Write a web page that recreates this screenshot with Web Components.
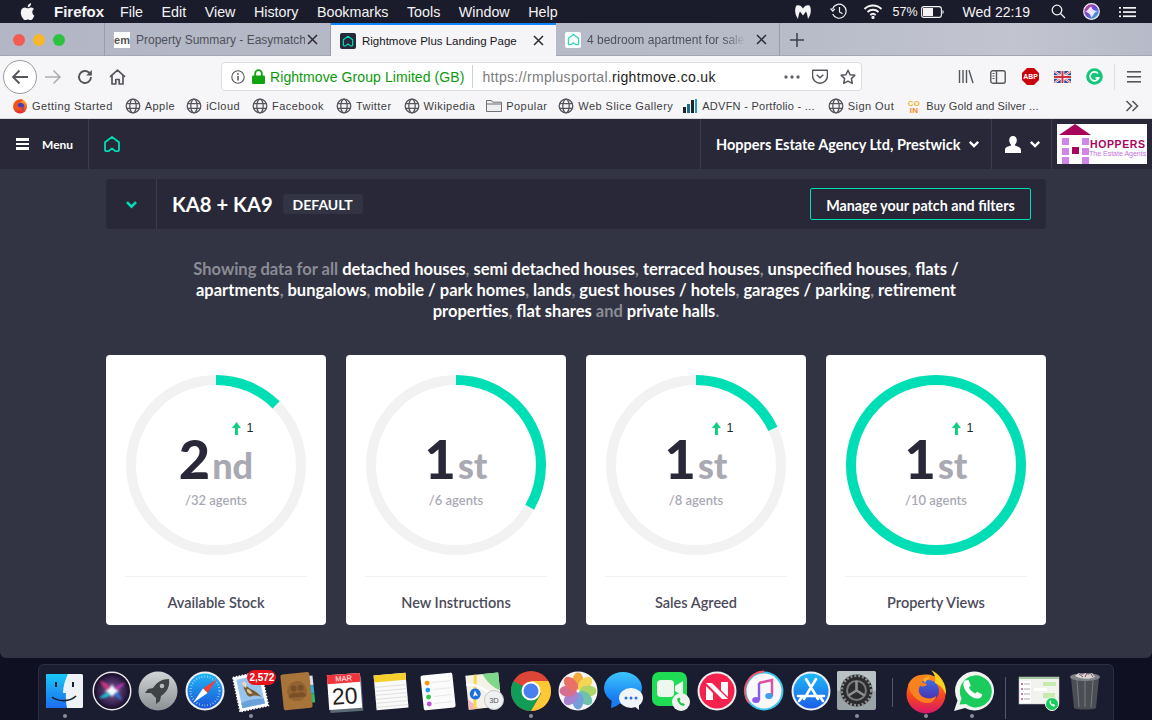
<!DOCTYPE html>
<html lang="en">
<head>
<meta charset="utf-8">
<title>Rightmove Plus Landing Page</title>
<style>
html, body { margin: 0; padding: 0; height: 100%; }
body {
    width: 1152px; height: 720px; overflow: hidden; background: #0f1122;
    display: flex; flex-direction: column;
    font-family: "Liberation Sans", Arial, sans-serif;
}
.window { display: flex; flex-direction: column; height: 635px; border-radius: 0 0 6px 6px; overflow: hidden; background: #323443; }
.main { flex: 1; display: flex; flex-direction: column; align-items: center; }
</style>
</head>
<body>
<mac-menubar></mac-menubar>
<div class="window">
    <browser-tabs></browser-tabs>
    <nav-toolbar></nav-toolbar>
    <bookmarks-bar></bookmarks-bar>
    <app-header></app-header>
    <div class="main">
        <patch-bar title-text="KA8 + KA9" badge="DEFAULT"></patch-bar>
        <data-summary></data-summary>
        <card-row>
            <stat-card rank="2" suffix="nd" agents="/32 agents" label="Available Stock" pct="12.5" change="1"></stat-card>
            <stat-card rank="1" suffix="st" agents="/6 agents" label="New Instructions" pct="33.3"></stat-card>
            <stat-card rank="1" suffix="st" agents="/8 agents" label="Sales Agreed" pct="18" change="1"></stat-card>
            <stat-card rank="1" suffix="st" agents="/10 agents" label="Property Views" pct="100" change="1"></stat-card>
        </card-row>
    </div>
</div>
<mac-dock></mac-dock>

<script>
// Browser chrome icons
const globe = `<svg width="16" height="16" viewBox="0 0 16 16" fill="none" stroke="#55565c" stroke-width="1.3"><circle cx="8" cy="8" r="6.8"/><ellipse cx="8" cy="8" rx="3.2" ry="6.8"/><path d="M1.6 5.6h12.8M1.6 10.4h12.8"/></svg>`;
const firefoxSmall = `<svg width="16" height="16" viewBox="0 0 16 16"><defs><linearGradient id="ffs" x1="0" y1="0" x2="0" y2="1"><stop offset="0" stop-color="#ffb31a"/><stop offset="1" stop-color="#e8202e"/></linearGradient></defs><circle cx="8" cy="8.5" r="7" fill="url(#ffs)"/><circle cx="8.6" cy="8.4" r="3.6" fill="#4b3fb8"/><path d="M3 4c2-3 7-4 10-1-3-1-4 0-5 2-2 0-3 1-2 3 1 2 5 2 6 0 0 3-4 5-7 4C2 11 1 7 3 4z" fill="#f4511e"/></svg>`;
const house = (color, size) => `<svg width="${size}" height="${size}" viewBox="0 0 18 18" fill="none" stroke="${color}" stroke-width="1.8" stroke-linejoin="round"><path d="M2 7.2 9 2l7 5.2V15a1.2 1.2 0 0 1-1.2 1.2h-1.6c-1 0-1.6-.4-2.2-1.2L9 13.6 7 15c-.6.8-1.2 1.2-2.2 1.2H3.200A1.200 1.200 0 0 1 2 15z"/></svg>`;
const chevron = (color, size) => `<svg width="${size}" height="${size}" viewBox="0 0 12 12" fill="none" stroke="${color}" stroke-width="2.400"><path d="M1.800 3.800 6 8l4.200-4.200"/></svg>`;

class MacMenubar extends HTMLElement {
    constructor() {
        super();
        this.attachShadow({mode: 'open'});
    }
    connectedCallback() {
        const items = ['File', 'Edit', 'View', 'History', 'Bookmarks', 'Tools', 'Window', 'Help'];
        this.shadowRoot.innerHTML = `
        <style>
            :host { display: flex; align-items: center; height: 23px; flex: none; background: #1b1c2b; color: #f4f4f6; font: 14.300px "Liberation Sans", Arial, sans-serif; }
            .apple { margin-left: 20px; width: 16px; display: flex; }
            b { margin-left: 18px; margin-right: 16px; font-size: 15px; }
            span { margin-right: 18.500px; }
            .right { margin-left: auto; display: flex; align-items: center; height: 100%; font-size: 13px; }
            .right > * { flex: none; }
        </style>
        <div class="apple"><svg width="15" height="17" viewBox="0 0 15 17" fill="#f4f4f6"><path d="M12.300 9c0-2 1.600-2.900 1.700-3C13 4.600 11.500 4.400 11 4.400c-1.300-.1-2.500.8-3.200.8-.7 0-1.700-.8-2.800-.8C3.600 4.400 2.200 5.200 1.500 6.500c-1.500 2.600-.4 6.400 1.100 8.500.7 1 1.500 2.200 2.600 2.100 1-.0 1.400-.7 2.700-.7s1.600.7 2.700.7 1.900-1 2.600-2.100c.8-1.200 1.100-2.300 1.200-2.400-.1 0-2.100-.8-2.100-3.600zM10.200 3c.6-.7 1-1.700.9-2.700-.9 0-1.900.6-2.500 1.300-.5.6-1 1.600-.9 2.600 1 .1 1.900-.5 2.500-1.200z"/></svg></div>
        <b>Firefox</b>
        ${items.map(i => `<span>${i}</span>`).join('')}
        <div class="right">
            <svg style="margin-right:18px" width="18" height="16" viewBox="0 0 18 16" fill="#f4f4f6"><path d="M9 4.500C7.500 1.500 4.500.5 2.500 1.500.5 4 .5 10 4 15c.5-3 1-6 2-7.500C7 9 8 10 9 11.500c1-1.500 2-2.500 3-4 1 1.500 1.500 4.500 2 7.500 3.500-5 3.500-11 1.500-13.500C13.500.5 10.500 1.500 9 4.500z"/></svg>
            <svg style="margin-right:15px" width="18" height="17" viewBox="0 0 18 17" fill="none" stroke="#f4f4f6" stroke-width="1.200"><path d="M2.500 6a7 7 0 1 1 .2 5"/><path d="M.6 5.500 2.800 8l2-2.200" /><path d="M9.500 4v5l3 1.800"/></svg>
            <svg style="margin-right:10px" width="20" height="15" viewBox="0 0 20 15" fill="none" stroke="#f4f4f6" stroke-width="1.900"><path d="M1.500 5a12 12 0 0 1 17 0M4.500 8a8 8 0 0 1 11 0M7.300 11a4 4 0 0 1 5.400 0"/><circle cx="10" cy="13.400" r=".7" fill="#f4f4f6"/></svg>
            <span style="margin-right:3px;font-size:12.500px">57%</span>
            <svg style="margin-right:19px" width="23" height="12" viewBox="0 0 23 12"><rect x=".6" y=".6" width="19.800" height="10.800" rx="2.400" fill="none" stroke="#f4f4f6" stroke-width="1.100"/><rect x="2" y="2" width="10" height="8" fill="#f4f4f6"/><path d="M21.500 4v4c.8-.3 1.200-1.200 1.200-2s-.4-1.700-1.200-2z" fill="#f4f4f6"/></svg>
            <span style="margin-right:21px;font-size:14px">Wed 22:19</span>
            <svg style="margin-right:17px" width="15" height="15" viewBox="0 0 15 15" fill="none" stroke="#f4f4f6" stroke-width="1.300"><circle cx="6" cy="6" r="4.800"/><path d="m9.500 9.500 4.500 4.500"/></svg>
            <svg style="margin-right:19px" width="17" height="17" viewBox="0 0 17 17"><defs><linearGradient id="sr" x1="0" y1="0" x2="1" y2="1"><stop offset="0" stop-color="#e0407f"/><stop offset=".5" stop-color="#6a4bd8"/><stop offset="1" stop-color="#2fd0e0"/></linearGradient></defs><circle cx="8.500" cy="8.500" r="7.800" fill="url(#sr)" stroke="#eee" stroke-width="1.200"/><path d="M2.500 8.500c3-1 3-4 6-5 0 3 3 4 6 5-3 0-4 4-6 6-1-3-3-5-6-6z" fill="#fff" opacity=".85"/></svg>
            <svg style="margin-right:16px" width="17" height="12" viewBox="0 0 17 12" fill="#f4f4f6"><rect x="4" y="1" width="13" height="1.700"/><rect x="4" y="5.200" width="13" height="1.700"/><rect x="4" y="9.400" width="13" height="1.700"/><rect y="1" width="2" height="1.700"/><rect y="5.200" width="2" height="1.700"/><rect y="9.400" width="2" height="1.700"/></svg>
        </div>`;
    }
}
customElements.define('mac-menubar', MacMenubar);

class BrowserTabs extends HTMLElement {
    constructor() {
        super();
        this.attachShadow({mode: 'open'});
    }
    connectedCallback() {
        const close = `<svg class="x" width="11" height="11" viewBox="0 0 11 11" stroke="#2b2b33" stroke-width="1.500"><path d="m1 1 9 9M10 1l-9 9"/></svg>`;
        this.shadowRoot.innerHTML = `
        <style>
            :host { display: flex; height: 33px; flex: none; background: linear-gradient(90deg, #b3b7c5, #b8bcc9 70%, #c2c5d0 88%, #b6bac8); font: 12px "Liberation Sans", Arial, sans-serif; color: #4e505c; box-shadow: inset 0 -1px 0 #a3a6b1; }
            .lights { width: 105px; display: flex; align-items: center; gap: 8px; padding-left: 13px; box-sizing: border-box; border-right: 1px solid #999ca9; }
            .lights i { width: 12px; height: 12px; border-radius: 50%; }
            .tab { display: flex; align-items: center; box-sizing: border-box; border-right: 1px solid #999ca9; padding-left: 9px; position: relative; white-space: nowrap; overflow: hidden; }
            .tab .t { flex: 1; overflow: hidden; margin-left: 6px; }
            .tab .x { flex: none; margin: 0 12px 0 2px; }
            .active { background: #f5f5f7; color: #17171c; border-top: 2px solid #0a84ff; border-right: none; box-shadow: none; }
            .active .t { flex: 1; margin-left: 6px; font-size: 11.500px; }
            .fade .t { -webkit-mask-image: linear-gradient(90deg, #000 82%, transparent 95%); mask-image: linear-gradient(90deg, #000 82%, transparent 95%); }
            .em { width: 16px; height: 16px; background: #fff; color: #555; font: bold 11px "Liberation Sans", sans-serif; text-align: center; line-height: 16px; flex: none; }
            .fav { width: 16px; height: 16px; flex: none; display: flex; align-items: center; justify-content: center; border-radius: 2px; }
            .plus { margin-left: 10px; align-self: center; display: flex; }
        </style>
        <div class="lights"><i style="background:#f45c53"></i><i style="background:#f8b62e"></i><i style="background:#2cc23f"></i></div>
        <div class="tab" style="width:226px"><span class="em">em</span><span class="t">Property Summary - Easymatch</span>${close}</div>
        <div class="tab active" style="width:225px"><span class="fav" style="background:#282838">${house('#00deb6', 12)}</span><span class="t">Rightmove Plus Landing Page</span>${close}</div>
        <div class="tab fade" style="width:224px"><span class="fav" style="background:#fff">${house('#28d9b8', 13)}</span><span class="t">4 bedroom apartment for sale in</span>${close}</div>
        <div class="plus"><svg width="14" height="14" viewBox="0 0 14 14" stroke="#3d3e48" stroke-width="1.500"><path d="M7 0v14M0 7h14"/></svg></div>`;
    }
}
customElements.define('browser-tabs', BrowserTabs);

class NavToolbar extends HTMLElement {
    constructor() {
        super();
        this.attachShadow({mode: 'open'});
    }
    connectedCallback() {
        this.shadowRoot.innerHTML = `
        <style>
            :host { display: flex; align-items: center; height: 36px; flex: none; z-index: 1; box-sizing: border-box; padding-top: 5px; background: #f6f6f8; font: 14px "Liberation Sans", Arial, sans-serif; }
            .back { width: 34px; height: 34px; margin-left: 3px; border-radius: 50%; border: 1px solid #9a9a9f; background: #fff; box-sizing: border-box; display: flex; align-items: center; justify-content: center; flex: none; }
            .btn { width: 32px; height: 32px; display: flex; align-items: center; justify-content: center; flex: none; }
            .url { width: 641px; height: 29px; margin-left: 88px; box-sizing: border-box; background: #fff; border: 1px solid #dcdcdf; border-radius: 4px; display: flex; align-items: center; flex: none; }
            .org { color: #0b9a0b; margin-left: 5px; white-space: nowrap; letter-spacing: .08px; }
            .sep { width: 1px; height: 23px; background: #c5d8c5; margin: 0 9px 0 8px; flex: none; }
            .addr { color: #7b7b80; white-space: nowrap; letter-spacing: .32px; }
            .addr em { color: #1d1d20; font-style: normal; }
            .end { margin-left: auto; display: flex; align-items: center; gap: 12px; margin-right: 5px; }
            .tools { display: flex; margin-left: 88px; }
            .vr { width: 1px; height: 26px; background: #dcdcdf; margin: 0 3px; }
        </style>
        <div class="back"><svg width="18" height="16" viewBox="0 0 18 16" fill="none" stroke="#55565c" stroke-width="1.800"><path d="M17 8H2M8.500 1.500 2 8l6.500 6.500"/></svg></div>
        <div class="btn"><svg width="18" height="16" viewBox="0 0 18 16" fill="none" stroke="#aeaeb2" stroke-width="1.600"><path d="M1 8h15M9.500 1.500 16 8l-6.500 6.500"/></svg></div>
        <div class="btn"><svg width="16" height="16" viewBox="0 0 16 16" fill="none" stroke="#55565c" stroke-width="1.900"><path d="M14 8a6 6 0 1 1-1.800-4.300L14.200 6"/><path d="M14.800 1v5.600H9.200" fill="#55565c" stroke="none"/></svg></div>
        <div class="btn"><svg width="17" height="16" viewBox="0 0 17 16" fill="none" stroke="#55565c" stroke-width="1.700" stroke-linejoin="round"><path d="M1 7.800 8.500 1.200 16 7.800M3 6.500V15h3.800v-4.500h3.400V15H14V6.500"/></svg></div>
        <div class="url">
            <svg style="margin-left:9px;margin-right:6px;flex:none" width="14" height="14" viewBox="0 0 14 14" fill="none" stroke="#55565c" stroke-width="1.100"><circle cx="7" cy="7" r="6.200"/><path d="M7 6v4.500" stroke-width="1.500"/><circle cx="7" cy="3.900" r=".9" fill="#55565c" stroke="none"/></svg>
            <svg style="flex:none;margin-left:1px" width="13" height="15" viewBox="0 0 13 15"><path d="M3.200 7V4.500a3.300 3.300 0 0 1 6.600 0V7" fill="none" stroke="#12a312" stroke-width="1.800"/><rect y="6.500" width="13" height="8.500" rx="1.200" fill="#12a312"/></svg>
            <span class="org">Rightmove Group Limited (GB)</span>
            <span class="sep"></span>
            <span class="addr">https://rmplusportal.<em>rightmove.co.uk</em></span>
            <div class="end">
                <svg width="16" height="4" viewBox="0 0 16 4" fill="#66666c"><circle cx="2" cy="2" r="1.700"/><circle cx="8" cy="2" r="1.700"/><circle cx="14" cy="2" r="1.700"/></svg>
                <svg width="16" height="15" viewBox="0 0 16 15" fill="none" stroke="#55565c" stroke-width="1.500"><path d="M1 1.200h14a.6.600 0 0 1 .5.500v5a7.500 7.500 0 0 1-15 0v-5a.6.600 0 0 1 .5-.5z"/><path d="m4.700 5.800 3.300 3 3.300-3"/></svg>
                <svg width="16" height="16" viewBox="0 0 16 16" fill="none" stroke="#55565c" stroke-width="1.500" stroke-linejoin="round"><path d="m8 1.300 2.100 4.400 4.800.6-3.500 3.300.9 4.800L8 12.100l-4.300 2.300.9-4.800L1.100 6.300l4.800-.6z"/></svg>
            </div>
        </div>
        <div class="tools" style="margin-left:88px">
            <div class="btn"><svg width="16" height="15" viewBox="0 0 16 15" fill="none" stroke="#55565c" stroke-width="1.400"><path d="M1.500 1v13M5 1v13M8.500 1v13M11 1.300l4 12.700"/></svg></div>
            <div class="btn"><svg width="16" height="14" viewBox="0 0 16 14" fill="none" stroke="#55565c" stroke-width="1.400"><rect x=".8" y=".8" width="14.400" height="12.400" rx="2"/><path d="M6.500 1v12"/><path d="M2.500 3.500h2M2.500 6h2M2.500 8.500h2" stroke-width="1.100"/></svg></div>
            <div class="btn"><svg width="17" height="17" viewBox="0 0 17 17"><path d="M5 0h7l5 5v7l-5 5H5l-5-5V5z" fill="#c9040e"/><text x="8.500" y="11" font-family="Liberation Sans" font-size="6.800" font-weight="700" fill="#fff" text-anchor="middle">ABP</text></svg></div>
            <div class="btn"><svg width="17" height="12" viewBox="0 0 17 12"><rect width="17" height="12" fill="#2c4a9b"/><path d="M0 0l17 12M17 0 0 12" stroke="#fff" stroke-width="2.200"/><path d="M0 0l17 12M17 0 0 12" stroke="#d0303c" stroke-width=".8"/><path d="M8.500 0v12M0 6h17" stroke="#fff" stroke-width="3.600"/><path d="M8.500 0v12M0 6h17" stroke="#d0303c" stroke-width="2"/></svg></div>
            <div class="btn"><svg width="17" height="17" viewBox="0 0 17 17"><circle cx="8.500" cy="8.500" r="8.300" fill="#12c67a"/><path d="M12 5.500A4.500 4.500 0 1 0 12.800 9.800H9.500" fill="none" stroke="#fff" stroke-width="1.700"/></svg></div>
            <div class="vr" style="margin-left:4px;margin-top:3px"></div>
            <div class="btn" style="margin-left:0"><svg width="14" height="12" viewBox="0 0 14 12" fill="#55565c"><rect width="14" height="1.600"/><rect y="5" width="14" height="1.600"/><rect y="10" width="14" height="1.600"/></svg></div>
        </div>`;
    }
}
customElements.define('nav-toolbar', NavToolbar);

class BookmarksBar extends HTMLElement {
    constructor() {
        super();
        this.attachShadow({mode: 'open'});
    }
    connectedCallback() {
        const folder = `<svg width="16" height="14" viewBox="0 0 16 14" fill="#efeff1" stroke="#6f6f75"><path d="M.5 12.500V1.500h5l1.200 1.700h8.800v9.300z"/><path d="M.5 5h15" fill="none"/></svg>`;
        const advfn = `<svg width="16" height="16" viewBox="0 0 16 16"><rect x="1" y="9" width="3" height="6" fill="#222"/><rect x="5" y="6" width="3" height="9" fill="#176f8a"/><rect x="9" y="2" width="3" height="13" fill="#222"/><rect x="13" y="1" width="2" height="14" fill="#1aa0c0"/></svg>`;
        const coin = `<svg width="16" height="16" viewBox="0 0 16 16"><text x="8" y="7.500" font-family="Liberation Sans" font-size="8" font-weight="700" fill="#f2b632" text-anchor="middle">CO</text><text x="8" y="15" font-family="Liberation Sans" font-size="8" font-weight="700" fill="#ef8a1c" text-anchor="middle">IN</text></svg>`;
        // icon, title, gap after, letter spacing
        const items = [
            [firefoxSmall, 'Getting Started', 12, .45], [globe, 'Apple', 11, .45], [globe, 'iCloud', 12, .45],
            [globe, 'Facebook', 12, .45], [globe, 'Twitter', 12, .45], [globe, 'Wikipedia', 11, .45],
            [folder, 'Popular', 11, .45], [globe, 'Web Slice Gallery', 9, .45], [advfn, 'ADVFN - Portfolio - ...', 13, .27],
            [globe, 'Sign Out', 12, .45], [coin, 'Buy Gold and Silver ...', 11, .13]
        ];
        this.shadowRoot.innerHTML = `
        <style>
            :host { display: flex; align-items: center; height: 27px; flex: none; padding-left: 12px; background: #f6f6f8; font: 11px "Liberation Sans", Arial, sans-serif; color: #3c3c41; box-shadow: inset 0 -1px 0 #d8d8da; box-sizing: border-box; }
            .item { display: flex; align-items: center; gap: 4px; white-space: nowrap; }
            svg { flex: none; display: block; }
            .more { margin-left: auto; margin-right: 13px; }
        </style>
        ${items.map(([ic, t, g, ls]) => `<div class="item" style="margin-right:${g}px;letter-spacing:${ls}px">${ic}<span>${t}</span></div>`).join('')}
        <svg class="more" width="14" height="12" viewBox="0 0 14 12" fill="none" stroke="#55565c" stroke-width="1.600"><path d="m1.500 1 5 5-5 5M7.500 1l5 5-5 5"/></svg>`;
    }
}
customElements.define('bookmarks-bar', BookmarksBar);

class AppHeader extends HTMLElement {
    constructor() {
        super();
        this.attachShadow({mode: 'open'});
    }
    connectedCallback() {
        this.shadowRoot.innerHTML = `
        <style>
            :host { display: flex; align-items: stretch; height: 50px; flex: none; background: #282838; color: #fff; font-family: Lato, sans-serif; }
            .menu { width: 89px; box-sizing: border-box; border-right: 1px solid #3c3d4c; display: flex; align-items: center; padding-left: 16px; gap: 13px; font-size: 12px; font-weight: 700; }
            .bars { display: flex; flex-direction: column; gap: 2px; }
            .bars i { width: 13px; height: 2.500px; background: #fff; display: block; }
            .home { margin-left: 14px; display: flex; align-items: center; }
            .agency { margin-left: auto; width: 292px; box-sizing: border-box; border-left: 1px solid #3c3d4c; border-right: 1px solid #3c3d4c; display: flex; align-items: center; gap: 7px; padding-left: 15px; font-size: 14.500px; font-weight: 700; white-space: nowrap; }
            .user { width: 60px; box-sizing: border-box; border-right: 1px solid #3c3d4c; display: flex; align-items: center; justify-content: center; gap: 8px; padding-left: 2px; }
            .logo { width: 90px; height: 40px; margin: 5px 5px 0 5px; background: #fff; }
            .logo svg { display: block; }
        </style>
        <div class="menu"><div class="bars"><i></i><i></i><i></i></div><span>Menu</span></div>
        <div class="home">${house('#00deb6', 18)}</div>
        <div class="agency"><span>Hoppers Estate Agency Ltd, Prestwick</span>${chevron('#fff', 12)}</div>
        <div class="user">
            <svg width="16" height="17" viewBox="0 0 16 17" fill="#fff"><path d="M8 0c2.500 0 3.800 1.800 3.800 4.200 0 1.700-.7 3.300-1.800 4.200v1.200c1.800.8 6 1.300 6 4.400v3H0v-3c0-3.100 4.200-3.600 6-4.400V8.400C4.900 7.500 4.200 5.900 4.200 4.200 4.200 1.800 5.500 0 8 0z"/></svg>
            ${chevron('#fff', 12)}
        </div>
        <div class="logo"><svg width="90" height="40" viewBox="0 0 90 40">
            <path d="M2 11 18 0l16 11z" fill="#a8045c"/>
            ${[[5, 14], [25, 14], [5, 24], [25, 24], [5, 33], [25, 33]].map(([x, y]) => `<rect x="${x}" y="${y}" width="7" height="7" fill="#cf86e6"/>`).join('')}
            <rect x="15" y="23" width="7" height="7" fill="#a8045c"/>
            <text x="33" y="24" font-family="Liberation Sans" font-size="10.500" font-weight="700" fill="#a8045c" letter-spacing=".6">HOPPERS</text>
            <text x="32" y="32" font-family="Liberation Sans" font-size="7" fill="#c46fdc">The Estate Agents</text>
        </svg></div>`;
    }
}
customElements.define('app-header', AppHeader);

class PatchBar extends HTMLElement {
    constructor() {
        super();
        this.attachShadow({mode: 'open'});
    }
    connectedCallback() {
        this.shadowRoot.innerHTML = `
        <style>
            :host { display: flex; align-items: center; width: 940px; height: 50px; margin-top: 10px; flex: none; background: #282838; border-radius: 4px; color: #fff; font-family: Lato, sans-serif; }
            .toggle { width: 51px; height: 100%; box-sizing: border-box; border-right: 1px solid #3c3d4c; display: flex; align-items: center; justify-content: center; }
            h1 { margin: 0 0 0 15px; font-size: 20.200px; font-weight: 700; white-space: nowrap; }
            .badge { margin-left: 10px; height: 20px; width: 80px; background: #323443; border-radius: 4px; display: flex; align-items: center; justify-content: center; font-size: 14px; font-weight: 700; }
            button { margin-left: auto; margin-right: 15px; width: 221px; height: 32px; border: 1px solid #00deb6; border-radius: 2px; background: transparent; color: #fff; font: 700 14.300px Lato, sans-serif; padding: 2px 0 0; }
        </style>
        <div class="toggle">${chevron('#00deb6', 13)}</div>
        <h1>${this.getAttribute('title-text')}</h1>
        <span class="badge">${this.getAttribute('badge')}</span>
        <button>Manage your patch and filters</button>`;
    }
}
customElements.define('patch-bar', PatchBar);

class DataSummary extends HTMLElement {
    constructor() {
        super();
        this.attachShadow({mode: 'open'});
    }
    connectedCallback() {
        this.shadowRoot.innerHTML = `
        <style>
            :host { display: block; width: 940px; margin-top: 30px; flex: none; text-align: center; color: #8b8c96; font: 700 16.500px/21px Lato, sans-serif; }
            b { color: #fff; font-weight: 700; }
        </style>
        Showing data for all <b>detached houses</b>, <b>semi detached houses</b>, <b>terraced houses</b>, <b>unspecified houses</b>, <b>flats /</b><br>
        <b>apartments</b>, <b>bungalows</b>, <b>mobile / park homes</b>, <b>lands</b>, <b>guest houses / hotels</b>, <b>garages / parking</b>, <b>retirement</b><br>
        <b>properties</b>, <b>flat shares</b> and <b>private halls</b>.`;
    }
}
customElements.define('data-summary', DataSummary);

class CardRow extends HTMLElement {
    constructor() {
        super();
        this.attachShadow({mode: 'open'});
    }
    connectedCallback() {
        this.shadowRoot.innerHTML = `
        <style>
            :host { display: flex; gap: 20px; margin-top: 33px; flex: none; }
        </style>
        <slot></slot>`;
    }
}
customElements.define('card-row', CardRow);

class StatCard extends HTMLElement {
    constructor() {
        super();
        this.attachShadow({mode: 'open'});
    }
    connectedCallback() {
        const pct = this.getAttribute('pct');
        const change = this.getAttribute('change');
        this.shadowRoot.innerHTML = `
        <style>
            :host { display: flex; flex-direction: column; align-items: center; width: 220px; height: 270px; background: #fff; border-radius: 4px; font-family: Lato, sans-serif; }
            .ring { position: relative; width: 180px; height: 180px; margin-top: 20px; flex: none; display: flex; flex-direction: column; align-items: center; }
            svg.arc { position: absolute; inset: 0; }
            .change { position: relative; height: 14px; margin-top: 46px; margin-left: 53px; display: flex; align-items: center; gap: 6px; font: 12.500px "Liberation Sans", sans-serif; color: #282838; visibility: ${change ? 'visible' : 'hidden'}; }
            .rank { position: relative; display: flex; align-items: baseline; color: #282838; font-size: 54px; font-weight: 900; line-height: 44px; margin-top: 2px; }
            .rank span { color: #a9a9b4; font-size: 36px; font-weight: 900; margin-left: 2px; }
            .agents { position: relative; color: #a9a9b4; font-size: 13px; font-weight: 600; margin-top: 5px; }
            .rule { width: 182px; height: 1px; background: #f0f0f2; margin-top: 21px; flex: none; }
            .label { flex: 1; display: flex; align-items: center; padding-top: 3px; color: #4b4b59; font-size: 14.500px; font-weight: 600; }
        </style>
        <div class="ring">
            <svg class="arc" width="180" height="180" viewBox="0 0 180 180" fill="none" stroke-width="10">
                <circle cx="90" cy="90" r="85" stroke="#f2f2f2"/>
                <circle cx="90" cy="90" r="85" stroke="#00deb6" pathLength="100" stroke-dasharray="${pct} 100" transform="rotate(-90 90 90)"/>
            </svg>
            <div class="change"><svg width="9" height="13" viewBox="0 0 9 13" fill="#0fd184"><path d="M4.500 0l4.500 6H6v7H3V6H0z"/></svg>${change || ''}</div>
            <div class="rank">${this.getAttribute('rank')}<span>${this.getAttribute('suffix')}</span></div>
            <div class="agents">${this.getAttribute('agents')}</div>
        </div>
        <div class="rule"></div>
        <div class="label">${this.getAttribute('label')}</div>`;
    }
}
customElements.define('stat-card', StatCard);

// Dock icons, all on a 40x40 box
const dockIcons = {
    finder: `<defs><linearGradient id="fd" x1="0" y1="0" x2="0" y2="1"><stop offset="0" stop-color="#19c8f8"/><stop offset="1" stop-color="#1e6cf0"/></linearGradient></defs><rect x="1" y="3" width="37" height="34" rx="1.500" fill="#eef2f7"/><path d="M2.500 3H23c-3 6-5 13-5 19h3c-.3 5 0 10 1 15H2.500A1.500 1.500 0 0 1 1 35.500v-31A1.500 1.500 0 0 1 2.500 3z" fill="url(#fd)"/><path d="M11 11v5M28 11v5" stroke="#16212e" stroke-width="2"/><path d="M7 26c6 5 18 5 24-1" fill="none" stroke="#16212e" stroke-width="1.600"/>`,
    siri: `<defs><radialGradient id="si" cx=".5" cy=".5" r=".5"><stop offset="0" stop-color="#7a5a9a"/><stop offset=".7" stop-color="#3a2450"/><stop offset="1" stop-color="#150d24"/></radialGradient><filter id="sb" x="-30%" y="-30%" width="160%" height="160%"><feGaussianBlur stdDeviation="1.300"/></filter></defs><circle cx="20" cy="20" r="19.500" fill="#e8e8ea"/><circle cx="20" cy="20" r="18" fill="url(#si)"/><g filter="url(#sb)"><path d="M8 10c6 1 10 5 13 10-5 1-10-3-13-10z" fill="#d0367f"/><path d="M33 12c-3 5-8 8-12 8 1-4 7-8 12-8z" fill="#b33bb0"/><path d="M7 27c5-4 10-7 14-7-2 5-8 8-14 7z" fill="#21c4d8"/><path d="M30 30c-4-3-8-6-10-10 5 0 9 4 10 10z" fill="#2f7ce0"/></g><path d="M12 20c4-.8 6-2.500 8-7 2 4.500 4 6.200 8 7-4 .8-6 2.500-8 6-2-3.500-4-5.200-8-6z" fill="#f3fdff" filter="url(#sb)"/>`,
    launchpad: `<defs><linearGradient id="lp" x1="0" y1="0" x2="0" y2="1"><stop offset="0" stop-color="#d0d4d6"/><stop offset="1" stop-color="#8b9094"/></linearGradient></defs><circle cx="20" cy="20" r="19.500" fill="url(#lp)"/><path d="M31 8c-7 0-12 3-16 9l-5 1-3 4 6 0 5 5 0 6 4-3 1-5c6-4 9-9 8-17z" fill="#3f4346"/><circle cx="24" cy="15" r="2.300" fill="#b5babd"/>`,
    safari: `<circle cx="20" cy="20" r="19.500" fill="#eef0f2"/><defs><linearGradient id="sf" x1="0" y1="0" x2="0" y2="1"><stop offset="0" stop-color="#1fb6f5"/><stop offset="1" stop-color="#1a55d8"/></linearGradient></defs><circle cx="20" cy="20" r="17.500" fill="url(#sf)"/><circle cx="20" cy="20" r="14.500" fill="none" stroke="#cfe8ff" stroke-width="2" stroke-dasharray=".6 2.200"/><path d="M32 8 22.500 22 18 17.500z" fill="#f0413a"/><path d="M8 32 22.500 22 18 17.500z" fill="#fff"/>`,
    mail: `<g transform="rotate(-12 20 20)"><rect x="5" y="3" width="29" height="35" fill="#fff"/><path d="M5 3h29v35H5z" fill="none" stroke="#fff" stroke-width="1.600" stroke-dasharray="1.500 1.500"/><rect x="8" y="6" width="23" height="29" fill="#97c5ee"/><path d="M8 30c5-2 12-2 23 0v5H8z" fill="#6aa2d8"/><path d="M14 12c2 1 4 4 6 6 3 2 7 6 9 10-3-2-6-3-9-3-3 1-5-1-5-4-1-3-2-6-1-9z" fill="#7a5a30"/><path d="M13 10c2-1 4 0 4 2l-1 4c-2-1-3-3-3-6z" fill="#e6dcc6"/><path d="M17 17c2 1 3 3 4 6-3 0-5-2-5-5z" fill="#d8c79e"/></g>`,
    contacts: `<g transform="rotate(-6 20 20)"><rect x="31" y="6" width="5" height="10" fill="#dde"/><rect x="31" y="16" width="5" height="8" fill="#2ab0e0"/><rect x="31" y="24" width="5" height="9" fill="#2fb86a"/><rect x="4" y="2" width="29" height="36" rx="2" fill="#a9743a"/><circle cx="19" cy="20" r="10" fill="#936332"/><circle cx="16" cy="17" r="3" fill="#7a5026"/><circle cx="23" cy="17" r="3" fill="#7a5026"/><path d="M10 26c1-6 11-6 12 0zM18 26c1-6 9-6 10 0z" fill="#7a5026"/></g>`,
    notes: `<g transform="rotate(-5 20 20)"><rect x="4" y="3" width="32" height="35" fill="#fafafa"/><rect x="4" y="3" width="32" height="7" fill="#f6cf2e"/><path d="M4 15h32M4 19h32M4 23h32M4 27h32M4 31h32M4 35h32" stroke="#d8d8d8" stroke-width=".8"/></g>`,
    reminders: `<g transform="rotate(-6 20 20)"><rect x="4" y="3" width="32" height="35" rx="2" fill="#fbfbfb"/><circle cx="10" cy="11" r="2.400" fill="#ff9500"/><circle cx="10" cy="18" r="2.400" fill="#1e9bf0"/><circle cx="10" cy="25" r="2.400" fill="#2ec84a"/><circle cx="10" cy="32" r="2.400" fill="#c04fd8"/><path d="M15 11h18M15 18h18M15 25h18M15 32h18" stroke="#e8e8e8"/></g>`,
    maps: `<g transform="rotate(-6 20 20)"><rect x="3" y="3" width="33" height="34" fill="#f4f1e6"/><path d="M20 3h16v18C30 18 24 12 20 3z" fill="#7fd88a"/><path d="M3 26l10 11H3z" fill="#f3b4c8"/><path d="M13 3 9 37" stroke="#f7d84b" stroke-width="3"/><path d="M3 12c10 0 20 6 30 20" stroke="#fff" stroke-width="2.500" fill="none"/><circle cx="11" cy="22" r="5.500" fill="#1b6fe0"/><path d="m11 18.500 2.500 6-2.500-1.200-2.500 1.200z" fill="#fff"/></g><circle cx="30" cy="29" r="9.500" fill="#eef0f2" stroke="#c5c7c9"/><text x="30" y="32" font-family="Liberation Sans" font-size="7.500" fill="#555" text-anchor="middle">3D</text>`,
    chrome: `<circle cx="20" cy="20" r="20" fill="#dd4536"/><path d="M20 20 2.700 10A20 20 0 0 0 20 40l10-17.300z" fill="#0f9d58"/><path d="M20 10h17.300A20 20 0 0 1 20 40l10-17.300z" fill="#fcc934"/><circle cx="20" cy="20" r="9.500" fill="#fff"/><circle cx="20" cy="20" r="7.500" fill="#4a80ee"/>`,
    photos: `<circle cx="20" cy="20" r="19.500" fill="#f5f5f5"/><g opacity=".85"><ellipse cx="20" cy="10" rx="5.500" ry="8.500" fill="#f7a01d"/><ellipse cx="20" cy="10" rx="5.500" ry="8.500" fill="#f2d13a" transform="rotate(45 20 20)"/><ellipse cx="20" cy="10" rx="5.500" ry="8.500" fill="#a5cf4c" transform="rotate(90 20 20)"/><ellipse cx="20" cy="10" rx="5.500" ry="8.500" fill="#59b8a0" transform="rotate(135 20 20)"/><ellipse cx="20" cy="10" rx="5.500" ry="8.500" fill="#5e8fd8" transform="rotate(180 20 20)"/><ellipse cx="20" cy="10" rx="5.500" ry="8.500" fill="#9a6ec8" transform="rotate(225 20 20)"/><ellipse cx="20" cy="10" rx="5.500" ry="8.500" fill="#d1587f" transform="rotate(270 20 20)"/><ellipse cx="20" cy="10" rx="5.500" ry="8.500" fill="#ea5a4f" transform="rotate(315 20 20)"/></g>`,
    messages: `<defs><linearGradient id="ms" x1="0" y1="0" x2="0" y2="1"><stop offset="0" stop-color="#3ec6fc"/><stop offset="1" stop-color="#0f6ef0"/></linearGradient></defs><ellipse cx="19" cy="17" rx="19" ry="16" fill="url(#ms)"/><path d="M8 27 7 37c4-1 8-3 10-6z" fill="#1a7df2"/><ellipse cx="27" cy="27" rx="12" ry="10" fill="#f2f5f8"/><path d="M30 35l5 4 0-7z" fill="#f2f5f8"/><g fill="#2b6fd8"><circle cx="22" cy="27" r="1.500"/><circle cx="27" cy="27" r="1.500"/><circle cx="32" cy="27" r="1.500"/></g>`,
    facetime: `<rect x="1" y="1" width="35" height="34" rx="7" fill="#1fdc55"/><rect x="6" y="9" width="17" height="17" rx="4" fill="#eef7ee"/><path d="m24 15 8-5v15l-8-5z" fill="#eef7ee"/><circle cx="30" cy="31" r="9" fill="#eef2ee"/><path d="M26.500 27.500c-1 2 2 7 6 7.500l1.500-1.500-2-1.500-1 .5c-1-.5-2-1.800-2.300-3l.8-1-1.200-2z" fill="#1fc24a"/>`,
    news: `<circle cx="20" cy="20" r="19.500" fill="#eef0f2"/><circle cx="20" cy="20" r="17.500" fill="#f5224d"/><path d="M9 12h6l16 16h-6zM9 15l7 7v7H9zM24 11h7v15l-7-7z" fill="#fff"/>`,
    music: `<circle cx="20" cy="20" r="19.500" fill="#3fc2ec"/><path d="M20 .5A19.500 19.500 0 0 0 5 32" fill="none" stroke="#f5556a" stroke-width="2"/><circle cx="20" cy="20" r="17.500" fill="#f8f8fb"/><path d="M15 12 28 9v16" fill="none" stroke="#e04ea0" stroke-width="2.400"/><path d="M15 12v17" stroke="#8a5ae8" stroke-width="2.400"/><ellipse cx="12" cy="29" rx="3.800" ry="3" fill="#8a5ae8"/><ellipse cx="25" cy="25" rx="3.800" ry="3" fill="#3ea0ea"/>`,
    appstore: `<circle cx="20" cy="20" r="19.500" fill="#eef0f2"/><defs><linearGradient id="as" x1="0" y1="0" x2="0" y2="1"><stop offset="0" stop-color="#21b9f8"/><stop offset="1" stop-color="#1a5ee6"/></linearGradient></defs><circle cx="20" cy="20" r="17.500" fill="url(#as)"/><path d="M15 8l12 20M25 8 13 28M7 25h26M8 30l3-4M32 30l-3-4" stroke="#fff" stroke-width="2.600" stroke-linecap="round"/>`,
    prefs: `<rect width="39" height="39" rx="2" fill="#9aa4a8"/><rect width="39" height="20" rx="2" fill="#b9c3c6"/><circle cx="19.500" cy="19.500" r="16" fill="#2b2c2e"/><circle cx="19.500" cy="19.500" r="15" fill="none" stroke="#8d8f90" stroke-width="3" stroke-dasharray="2 2"/><circle cx="19.500" cy="19.500" r="10.500" fill="#77797b"/><circle cx="19.500" cy="19.500" r="8.500" fill="#2b2c2e"/><path d="M19.500 19.500V10M19.500 19.500l8 5M19.500 19.500l-8 5" stroke="#8d8f90" stroke-width="2.600"/>`,
    firefox: `<defs><linearGradient id="ff" x1="0" y1="0" x2="0" y2="1"><stop offset="0" stop-color="#ff9a1c"/><stop offset=".55" stop-color="#f6461f"/><stop offset="1" stop-color="#d9176b"/></linearGradient><linearGradient id="fp" x1="0" y1="0" x2="0" y2="1"><stop offset="0" stop-color="#3f6be0"/><stop offset="1" stop-color="#4a2aa8"/></linearGradient></defs><circle cx="20" cy="23" r="19.500" fill="url(#ff)"/><circle cx="22" cy="20" r="11" fill="url(#fp)"/><path d="M25 -1c9 4 16 14 15 25-2-6-6-10-11-12 1-4 0-9-4-13z" fill="#fcd21f"/><path d="M2 14c2-5 6-9 12-10 2 0 5 0 7 1-3 1-5 3-6 6l6 2c0 2-4 3-7 2-2 3-2 8 3 11 4 2 10 2 13-1 0 3-3 6-7 7C14 33 5 26 2 14z" fill="#f9811e"/><path d="M17 9c2-2 4-3 7-2-3 1-4 3-5 5z" fill="#ffb52a"/>`,
    whatsapp: `<path d="M2 40l3.500-10.500A19.500 19.500 0 1 1 13 37z" fill="#f2f4f2"/><path d="M7.500 33.500 9.500 27.500A16 16 0 1 1 14 33z" fill="#1bcc5c"/><path d="M13 9.500c-2.500 2-2.500 6.500 2 12s9.500 7 13 5.500c1.200-.5 2.200-2.200 2.200-3.500l-5-2.800-2 1.800c-2.200-.7-5.500-4-6.200-6l1.800-2L16.500 9z" fill="#fff"/>`,
    thumb: `<rect x="0" y="6" width="40" height="27" fill="#f2f2ee" stroke="#ccc" stroke-width=".5"/><rect x="0" y="6" width="40" height="2" fill="#a8c8a0"/><rect x="1" y="10" width="11" height="22" fill="#fff"/><g fill="#b58"><circle cx="3" cy="13" r="1"/><circle cx="3" cy="18" r="1"/><circle cx="3" cy="23" r="1"/><circle cx="3" cy="28" r="1"/></g><path d="M5 13h6M5 18h6M5 23h6M5 28h6" stroke="#aaa"/><rect x="24" y="11" width="13" height="4" fill="#c5ecae"/><rect x="15" y="17" width="13" height="3" fill="#fff"/><rect x="24" y="22" width="12" height="5" fill="#c5ecae"/><circle cx="33" cy="33" r="6.500" fill="#1bcc5c" stroke="#fff"/><path d="M30.500 30.500c-.5 2 3 5.500 5 5l.5-1.500-1.500-1-.8.600c-.8-.3-1.600-1.200-1.900-2l.6-.8-1-1.500z" fill="#fff"/>`,
    trash: `<path d="M6 7h28l-3 30c-2 2-20 2-22 0z" fill="#55585c" opacity=".85"/><path d="M12 9l2 27M20 9v27M28 9l-2 27" stroke="#85888c" stroke-width=".8"/><ellipse cx="20" cy="6" rx="15" ry="4" fill="#7d8085"/><path d="M10 5l4-3 3 2 4-2 2 2 4-2 3 4c-6 3-15 2-20-1z" fill="#d5d5d8"/><path d="M14 3l4 3M22 2l-2 4M26 3l2 3" stroke="#9a4a52"/>`
};

class MacDock extends HTMLElement {
    constructor() {
        super();
        this.attachShadow({mode: 'open'});
    }
    icon(name, dot) {
        return `<div class="slot"><svg width="40" height="40" viewBox="0 0 40 40">${dockIcons[name]}</svg>${dot ? '<i></i>' : ''}</div>`;
    }
    connectedCallback() {
        this.shadowRoot.innerHTML = `
        <style>
            :host { display: flex; align-items: flex-start; flex: none; width: 1076px; height: 56px; margin: 6px 0 0 38px; box-sizing: border-box; padding: 6px 0 0 6px; background: #1a1c30; border: 1px solid #2c2e42; border-bottom: none; border-radius: 6px 6px 0 0; }
            .slot { position: relative; width: 40px; height: 40px; margin-right: 6.600px; flex: none; }
            .slot svg { display: block; overflow: visible; }
            .slot i { position: absolute; left: 18px; top: 43px; width: 4px; height: 4px; border-radius: 50%; background: #8b8d96; }
            .badge { position: absolute; left: 16px; top: -1px; height: 15px; min-width: 27px; padding: 0 2px; box-sizing: border-box; border-radius: 8px; background: #e8141c; color: #fff; font: 700 10px/15px "Liberation Sans", Arial, sans-serif; text-align: center; }
            .cal { position: relative; width: 33px; height: 35px; margin: 3px 0 0 3px; background: #fff; transform: rotate(-4deg); box-shadow: 1px 3px 0 #5b6a74; display: flex; flex-direction: column; align-items: center; font-family: "Liberation Sans", Arial, sans-serif; }
            .cal span { width: 100%; height: 9px; background: #f0343c; color: #fff; font-size: 7.500px; line-height: 9px; text-align: center; }
            .cal b { font-size: 23px; font-weight: 400; line-height: 26px; color: #222; }
            .sep { width: 1px; flex: none; background: #55576a; }
        </style>
        ${this.icon('finder', true)}${this.icon('siri')}${this.icon('launchpad')}${this.icon('safari')}
        <div class="slot"><svg width="40" height="40" viewBox="0 0 40 40">${dockIcons.mail}</svg><span class="badge">2,572</span><i></i></div>
        ${this.icon('contacts')}
        <div class="slot"><div class="cal"><span>MAR</span><b>20</b></div></div>
        ${this.icon('notes')}${this.icon('reminders')}${this.icon('maps')}${this.icon('chrome', true)}${this.icon('photos')}${this.icon('messages')}${this.icon('facetime')}${this.icon('news')}${this.icon('music')}${this.icon('appstore')}${this.icon('prefs', true)}
        <div class="sep" style="height:29px;margin:7px 13px 0 8px"></div>
        ${this.icon('firefox', true)}${this.icon('whatsapp', true)}
        <div class="sep" style="height:42px;margin:6px 13px 0 6px"></div>
        ${this.icon('thumb')}${this.icon('trash')}`;
    }
}
customElements.define('mac-dock', MacDock);
</script>
</body>
</html>
